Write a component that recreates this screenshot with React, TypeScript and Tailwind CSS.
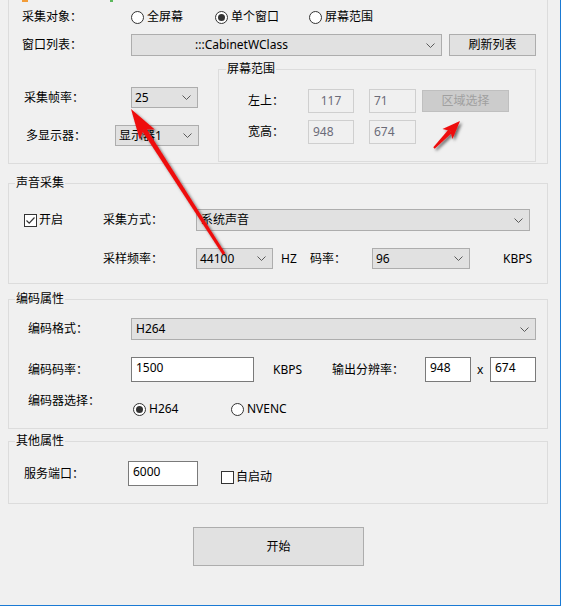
import type { ReactNode } from "react";

function Chevron() {
  return (
    <svg width="9" height="5" viewBox="0 0 9 5" className="shrink-0">
      <path d="M0.5 0.5 L4.5 4.5 L8.5 0.5" fill="none" stroke="#5a5a5a" strokeWidth="1" />
    </svg>
  );
}

function Combo({ value, className, textClass = "pl-[3px]" }: { value: string; className: string; textClass?: string }) {
  return (
    <div className={`flex items-center justify-between border border-[#adadad] bg-[#e1e1e1] pr-[6px] ${className}`}>
      <span className={textClass}>{value}</span>
      <Chevron />
    </div>
  );
}

function Radio({ checked = false, label }: { checked?: boolean; label: string }) {
  return (
    <div className="flex items-center gap-[3px]">
      <span className="flex h-[13px] w-[13px] items-center justify-center rounded-full border border-[#333333] bg-white">
        {checked && <span className="h-[7px] w-[7px] rounded-full bg-[#333333]" />}
      </span>
      <span>{label}</span>
    </div>
  );
}

function Check({ checked = false, label }: { checked?: boolean; label: string }) {
  return (
    <div className="flex items-center gap-[2px]">
      <span className="flex h-[13px] w-[13px] items-center justify-center border border-[#333333] bg-white">
        {checked && (
          <svg width="11" height="11" viewBox="0 0 11 11">
            <path d="M1.5 5.5 L4.2 8.2 L9.5 2.5" fill="none" stroke="#333" strokeWidth="1.2" />
          </svg>
        )}
      </span>
      <span>{label}</span>
    </div>
  );
}

function TextBox({ value, className }: { value: string; className: string }) {
  return (
    <div className={`flex items-center border border-[#7a7a7a] bg-white pb-[3px] pl-[4px] ${className}`}>{value}</div>
  );
}

function DisabledBox({ value, center = false }: { value: string; center?: boolean }) {
  return (
    <div
      className={`flex h-[24px] items-center border border-[#cfcfcf] bg-[#f0f0f0] text-[#6b6b78] ${
        center ? "justify-center" : "pl-[4px]"
      }`}
    >
      {value}
    </div>
  );
}

function Group({ title, className, children }: { title: string; className: string; children: ReactNode }) {
  return (
    <fieldset className={`border border-[#dcdcdc] ${className}`}>
      <legend className="ml-[6px] px-[1px] leading-[14px]">{title}</legend>
      {children}
    </fieldset>
  );
}

function Arrows() {
  return (
    <svg className="pointer-events-none absolute inset-0" width="561" height="606" viewBox="0 0 561 606">
      <defs>
        <filter id="sh" x="-30%" y="-30%" width="160%" height="160%">
          <feDropShadow dx="2" dy="2" stdDeviation="1.6" floodColor="#000" floodOpacity="0.55" />
        </filter>
      </defs>
      <g filter="url(#sh)" fill="#ee0f0f">
        <polygon points="146.1,127.9 141.9,130.6 222.7,254.8 225.3,253.2" />
        <polygon points="131,109 154.8,129.4 144,129.2 139.6,139.2" />
        <polygon points="452.1,132.8 448.5,129.4 433.3,147.3 434.7,148.7" />
        <polygon points="460,121 452.5,138.9 450.3,131.1 442.5,129.1" />
      </g>
    </svg>
  );
}

export default function App() {
  return (
    <div className="relative h-[606px] w-[561px] overflow-hidden border-r border-b border-[#1a7ad4] bg-[#f0f0f0] font-['Noto_Sans','Noto_Sans_CJK_SC',sans-serif] text-[12px] leading-[16px] text-black">
      {/* 采集 */}
      <div className="-mt-[8px] ml-[8px] h-[172px] w-[540px] border border-[#dcdcdc]">
        <div className="flex h-[9px] items-end">
          <span className="ml-[13px] h-[2px] w-[6px] bg-[#f29c38]" />
          <span className="ml-[82px] h-[3px] w-[3px] bg-[#5cb85c]" />
        </div>
        <div className="mt-[5px] flex h-[20px] items-center">
          <span className="w-[122px] pl-[13px]">采集对象：</span>
          <div className="w-[84px]">
            <Radio label="全屏幕" />
          </div>
          <div className="w-[94px]">
            <Radio checked label="单个窗口" />
          </div>
          <Radio label="屏幕范围" />
        </div>
        <div className="mt-[7px] flex h-[22px] items-center">
          <span className="w-[122px] pl-[13px]">窗口列表：</span>
          <Combo value=":::CabinetWClass" className="h-[22px] w-[311px]" textClass="pl-[63px]" />
          <button className="ml-[7px] h-[22px] w-[87px] border border-[#adadad] bg-[#e1e1e1]">刷新列表</button>
        </div>
        <div className="mt-[6px] flex">
          <div className="w-[209px]">
            <div className="mt-[25px] flex h-[21px] items-center">
              <span className="w-[122px] pl-[15px]">采集帧率：</span>
              <Combo value="25" className="h-[21px] w-[67px]" />
            </div>
            <div className="mt-[17px] flex h-[21px] items-center">
              <span className="w-[106px] pl-[17px]">多显示器：</span>
              <Combo value="显示器1" className="h-[21px] w-[84px]" />
            </div>
          </div>
          <fieldset className="h-[100px] w-[318px] border border-[#dcdcdc]">
            <legend className="ml-[7px] px-[1px] leading-[14px]">屏幕范围</legend>
            <div className="mt-[13px] flex h-[24px] items-center">
              <span className="w-[89px] pl-[29px]">左上：</span>
              <div className="w-[46px]">
                <DisabledBox value="117" center />
              </div>
              <div className="ml-[15px] w-[47px]">
                <DisabledBox value="71" />
              </div>
              <div className="ml-[6px] flex h-[22px] w-[87px] items-center justify-center border border-[#bfbfbf] bg-[#cccccc] text-[#a0a0a0]">
                区域选择
              </div>
            </div>
            <div className="mt-[7px] flex h-[24px] items-center">
              <span className="w-[89px] pl-[29px]">宽高：</span>
              <div className="w-[46px]">
                <DisabledBox value="948" />
              </div>
              <div className="ml-[15px] w-[47px]">
                <DisabledBox value="674" />
              </div>
            </div>
          </fieldset>
        </div>
      </div>

      {/* 声音采集 */}
      <Group title="声音采集" className="mt-[12px] ml-[8px] h-[108px] w-[540px]">
        <div className="mt-[19px] flex h-[22px] items-center">
          <div className="w-[94px] pl-[15px]">
            <Check checked label="开启" />
          </div>
          <span className="w-[93px]">采集方式：</span>
          <Combo value="系统声音" className="h-[22px] w-[334px]" textClass="pl-[4px]" />
        </div>
        <div className="mt-[17px] flex h-[21px] items-center pl-[94px]">
          <span className="w-[93px]">采样频率：</span>
          <Combo value="44100" className="h-[21px] w-[77px]" />
          <span className="ml-[8px] w-[29px]">HZ</span>
          <span className="w-[62px]">码率：</span>
          <Combo value="96" className="h-[21px] w-[98px]" />
          <span className="ml-[33px]">KBPS</span>
        </div>
      </Group>

      {/* 编码属性 */}
      <Group title="编码属性" className="mt-[8px] ml-[8px] h-[137px] w-[540px]">
        <div className="mt-[12px] flex h-[22px] items-center">
          <span className="w-[122px] pl-[19px]">编码格式：</span>
          <Combo value="H264" className="h-[22px] w-[405px]" textClass="pl-[4px]" />
        </div>
        <div className="mt-[17px] flex h-[25px] items-center">
          <span className="w-[122px] pl-[19px]">编码码率：</span>
          <TextBox value="1500" className="h-[25px] w-[123px]" />
          <span className="ml-[19px] w-[59px]">KBPS</span>
          <span className="w-[93px]">输出分辨率：</span>
          <TextBox value="948" className="h-[25px] w-[46px]" />
          <span className="w-[19px] pl-[6px]">x</span>
          <TextBox value="674" className="h-[25px] w-[46px]" />
        </div>
        <div className="flex items-start">
          <span className="mt-[11px] w-[122px] pl-[19px]">编码器选择：</span>
          <div className="mt-[19px] ml-[2px] flex h-[16px] items-center">
            <div className="w-[98px]">
              <Radio checked label="H264" />
            </div>
            <Radio label="NVENC" />
          </div>
        </div>
      </Group>

      {/* 其他属性 */}
      <Group title="其他属性" className="mt-[5px] ml-[8px] h-[70px] w-[540px]">
        <div className="mt-[13px] flex items-start">
          <span className="mt-[5px] w-[119px] pl-[15px]">服务端口：</span>
          <TextBox value="6000" className="h-[25px] w-[70px]" />
          <div className="mt-[8px] ml-[23px] flex h-[16px] items-center">
            <Check label="自启动" />
          </div>
        </div>
      </Group>

      <div className="mt-[23px] ml-[193px] flex h-[39px] w-[171px] items-center justify-center border border-[#adadad] bg-[#e1e1e1]">
        开始
      </div>

      <Arrows />
    </div>
  );
}
